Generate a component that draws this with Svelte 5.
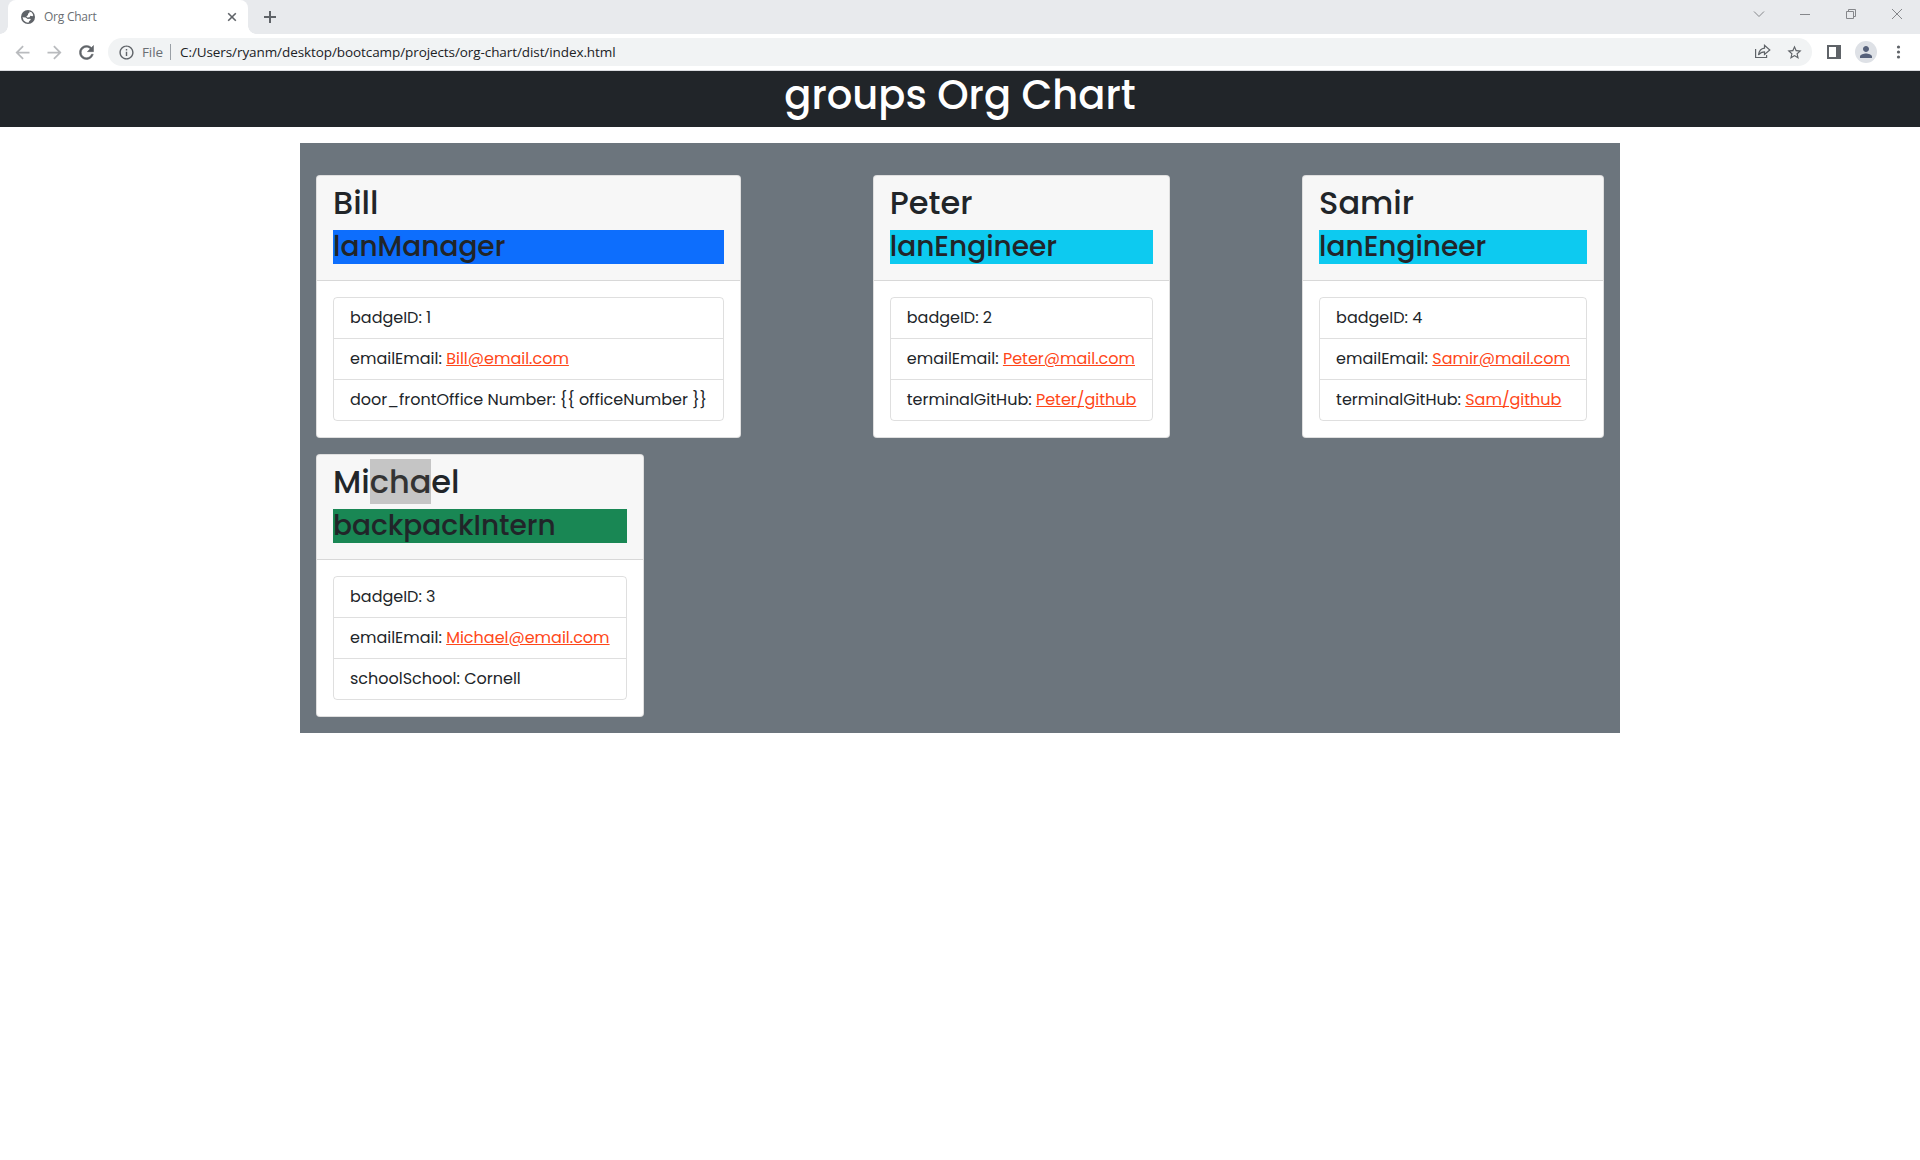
<script>
  const people = [
    {
      name: [{ text: 'Bill' }],
      role: 'lanManager', tone: 'manager',
      rows: [
        { label: 'badgeID: 1' },
        { label: 'emailEmail: ', link: 'Bill@email.com' },
        { label: 'door_frontOffice Number: {{ officeNumber }}' }
      ]
    },
    {
      name: [{ text: 'Peter' }],
      role: 'lanEngineer', tone: 'engineer',
      rows: [
        { label: 'badgeID: 2' },
        { label: 'emailEmail: ', link: 'Peter@mail.com' },
        { label: 'terminalGitHub: ', link: 'Peter/github' }
      ]
    },
    {
      name: [{ text: 'Samir' }],
      role: 'lanEngineer', tone: 'engineer',
      rows: [
        { label: 'badgeID: 4' },
        { label: 'emailEmail: ', link: 'Samir@mail.com' },
        { label: 'terminalGitHub: ', link: 'Sam/github' }
      ]
    },
    {
      name: [{ text: 'Mi' }, { text: 'cha', selected: true }, { text: 'el' }],
      role: 'backpackIntern', tone: 'intern',
      rows: [
        { label: 'badgeID: 3' },
        { label: 'emailEmail: ', link: 'Michael@email.com' },
        { label: 'schoolSchool: Cornell' }
      ]
    }
  ];

  // Tracks the browser's own labels out or in to the given width.
  function fit(node, width) {
    const natural = node.getBoundingClientRect().width;
    node.style.letterSpacing = (width - natural) / node.textContent.length + 'px';
  }
</script>

<div class="browser">
  <div class="tabstrip">
    <div class="tab">
      <svg class="globe" viewBox="0 0 14 14"><circle cx="7" cy="7" r="7" /><path d="M8.300 1.600l2.600 1 1.400 2.600-.8 1.100-2.200-.6-.7 1.500-2.300.4-1-1.100 1.700-1.500.1-1.500 1.300-.5zM1.500 7.300l3.100.3 2.100 1.500 2.500-.3.6 1-1.500 1.100-.9 1.800-2.300-.4-2.400-1.900z" /></svg>
      <span class="tab-title"><span class="fit" use:fit={52.5}>Org Chart</span></span>
      <svg class="tab-close" viewBox="0 0 10 10"><path d="M1.2 1.2l7.6 7.6M8.8 1.2L1.2 8.8" /></svg>
    </div>
    <svg class="new-tab" viewBox="0 0 12 12"><path d="M6 0v12M0 6h12" /></svg>
    <div class="window-buttons">
      <span><svg viewBox="0 0 12 12"><path d="M1 3.500l5 5 5-5" /></svg></span>
      <span><svg viewBox="0 0 12 12"><path d="M1 6.500h10" /></svg></span>
      <span><svg viewBox="0 0 12 12"><path d="M1.500 3.500h7v7h-7zM3.500 3.500v-2h7v7h-2" /></svg></span>
      <span><svg viewBox="0 0 12 12"><path d="M1 1l10 10M11 1L1 11" /></svg></span>
    </div>
  </div>

  <div class="toolbar">
    <span class="tool faded"><svg class="nav" viewBox="0 0 24 24"><path d="M20 11H7.83l5.59-5.59L12 4l-8 8 8 8 1.41-1.41L7.83 13H20v-2z" /></svg></span>
    <span class="tool faded"><svg class="nav" viewBox="0 0 24 24"><path d="M4 11h12.170l-5.590-5.590L12 4l8 8-8 8-1.410-1.410L16.170 13H4v-2z" /></svg></span>
    <span class="tool"><svg class="nav reload" viewBox="0 0 24 24"><path d="M17.65 6.35C16.2 4.9 14.21 4 12 4c-4.42 0-7.99 3.58-7.99 8s3.57 8 7.99 8c3.73 0 6.84-2.55 7.73-6h-2.08c-.82 2.33-3.04 4-5.65 4-3.31 0-6-2.69-6-6s2.69-6 6-6c1.66 0 3.14.69 4.22 1.78L13 11h7V4l-2.35 2.35z" /></svg></span>
    <div class="omnibox">
      <svg class="info" viewBox="0 0 24 24"><path d="M11 7h2v2h-2zm0 4h2v6h-2zm1-9C6.48 2 2 6.48 2 12s4.48 10 10 10 10-4.48 10-10S17.52 2 12 2zm0 18c-4.41 0-8-3.59-8-8s3.59-8 8-8 8 3.59 8 8-3.59 8-8 8z" /></svg>
      <span class="scheme"><span class="fit" use:fit={21}>File</span></span>
      <span class="divider"></span>
      <span class="url"><span class="fit" use:fit={435.5}>C:/Users/ryanm/desktop/bootcamp/projects/org-chart/dist/index.html</span></span>
      <span class="tool"><svg class="share" viewBox="0 0 16 16"><path d="M.6 5v8.500h11V11M3.500 11C4 7.500 6 4.500 9.500 4.200V1.300L14.800 6 9.500 10.500V7.800C7 7.800 5 9 3.500 11z" /></svg></span>
      <span class="tool"><svg class="star" viewBox="0 0 24 24"><path d="M22 9.24l-7.19-.62L12 2 9.19 8.63 2 9.24l5.46 4.73L5.82 21 12 17.27 18.18 21l-1.63-7.03L22 9.24zM12 15.4l-3.76 2.27 1-4.28-3.32-2.88 4.38-.38L12 6.1l1.71 4.04 4.38.38-3.32 2.88 1 4.28L12 15.4z" /></svg></span>
    </div>
    <span class="tool"><svg class="panel" viewBox="0 0 14 14"><path fill-rule="evenodd" d="M0 0h14v14H0zM2 2v10h7V2z" /></svg></span>
    <span class="tool"><span class="avatar"><svg viewBox="0 0 24 24"><path d="M12 12c2.21 0 4-1.79 4-4s-1.79-4-4-4-4 1.79-4 4 1.79 4 4 4zm0 2c-2.67 0-8 1.34-8 4v2h16v-2c0-2.66-5.33-4-8-4z" /></svg></span></span>
    <span class="tool"><svg class="dots" viewBox="0 0 4 14"><circle cx="2.500" cy="2" r="1.6" /><circle cx="2.500" cy="7" r="1.6" /><circle cx="2.500" cy="12" r="1.6" /></svg></span>
  </div>
</div>

<header><h1>groups Org Chart</h1></header>

<main>
  {#each people as person}
    <article class="card">
      <div class="card-header">
        <h2>{#each person.name as part}<span class:selected={part.selected}>{part.text}</span>{/each}</h2>
        <h3 class={person.tone}>{person.role}</h3>
      </div>
      <div class="card-body">
        <ul>
          {#each person.rows as row}
            <li><span>{row.label}</span>{#if row.link}<a href="#top">{row.link}</a>{/if}</li>
          {/each}
        </ul>
      </div>
    </article>
  {/each}
</main>

<style>
  :global(body) {
    margin: 0;
    background: #fff;
    color: #212529;
    font: 400 16px/24px Poppins, Inter, sans-serif;
  }
  .fit { white-space: pre; }

  .browser {
    font-family: 'Open Sans', sans-serif;
    border-bottom: 1px solid #dadce0;
  }
  svg { display: block; flex: none; }

  .tabstrip {
    display: flex;
    align-items: center;
    height: 34px;
    padding-left: 8px;
    background: #e8eaed;
  }
  .tab {
    position: relative;
    display: flex;
    align-items: center;
    box-sizing: border-box;
    width: 240px;
    height: 34px;
    padding: 0 11px 0 13px;
    border-radius: 8px 8px 0 0;
    background: #fff;
  }
  .tab::before, .tab::after {
    content: '';
    position: absolute;
    bottom: 0;
    width: 8px;
    height: 8px;
  }
  .tab::before { left: -8px; background: radial-gradient(circle at 0 0, transparent 7.5px, #fff 8px); }
  .tab::after { right: -8px; background: radial-gradient(circle at 100% 0, transparent 7.5px, #fff 8px); }
  .globe { width: 14px; height: 14px; fill: #5f6368; }
  .globe path { fill: #fff; }
  .tab-title { flex: 1; margin-left: 9px; font-size: 12px; line-height: 16px; color: #6a6e73; }
  .tab-close { width: 10px; height: 10px; stroke: #5f6368; stroke-width: 1.6; }
  .new-tab { width: 12px; height: 12px; margin-left: 16px; stroke: #5f6368; stroke-width: 2; }
  .window-buttons { display: flex; align-self: flex-start; margin-left: auto; height: 28px; }
  .window-buttons span { display: grid; place-items: center; width: 46px; }
  .window-buttons svg { width: 12px; height: 12px; fill: none; stroke: #85878b; stroke-width: 1; }

  .toolbar {
    display: flex;
    align-items: center;
    height: 36px;
    padding: 0 6px;
    background: #fff;
  }
  .tool { display: grid; place-items: center; flex: none; width: 32px; height: 28px; fill: #5f6368; }
  .faded { fill: #b9bbbe; }
  .nav { width: 21px; height: 21px; }
  .reload { stroke: #5f6368; stroke-width: 0.6; }
  .omnibox {
    display: flex;
    align-items: center;
    flex: 1;
    height: 28px;
    margin: 0 6px;
    padding: 0 2px 0 9.5px;
    border-radius: 14px;
    background: #f1f3f4;
    box-sizing: border-box;
    font-size: 13.5px;
    line-height: 20px;
  }
  .info { width: 17px; height: 17px; fill: #5f6368; }
  .scheme { width: 28px; margin-left: 7.5px; color: #6a6e73; }
  .divider { width: 1px; height: 16px; background: #9aa0a6; }
  .url { flex: 1; margin-left: 9px; color: #202124; }
  .share { width: 16px; height: 16px; margin-left: 1px; fill: none; stroke: #5f6368; stroke-width: 1.2; }
  .star { width: 17px; height: 17px; }
  .panel { width: 14px; height: 14px; }
  .avatar { display: grid; place-items: center; width: 22px; height: 22px; border-radius: 50%; background: #dee1e6; }
  .avatar svg { width: 18px; height: 18px; fill: #56617a; }
  .dots { width: 4px; height: 14px; overflow: visible; }

  header { height: 56px; background: #212529; color: #fff; text-align: center; }
  h1, h2, h3 { margin: 0 0 8px; font-weight: 500; line-height: 1.2; }
  h1 { font-size: 40px; }
  h2 { font-size: 32px; }
  h3 { font-size: 28px; }

  main {
    display: flex;
    flex-wrap: wrap;
    justify-content: space-between;
    gap: 16px;
    box-sizing: border-box;
    width: 1320px;
    margin: 16px auto 0;
    padding: 32px 16px 16px;
    background: #6c757d;
  }
  .card {
    border: 1px solid rgba(0, 0, 0, 0.125);
    border-radius: 4px;
    background: #fff;
  }
  .card-header {
    padding: 8px 16px;
    border-bottom: 1px solid rgba(0, 0, 0, 0.125);
    border-radius: 3px 3px 0 0;
    background: rgba(0, 0, 0, 0.03);
  }
  .selected { background: #c5c5c5; color: #333; }
  .manager { background: #0d6efd; }
  .engineer { background: #0dcaf0; }
  .intern { background: #198754; }
  .card-body { padding: 16px; }
  ul {
    margin: 0;
    padding: 0;
    list-style: none;
    border: 1px solid rgba(0, 0, 0, 0.125);
    border-radius: 4px;
  }
  li { padding: 8px 16px; white-space: nowrap; }
  li span { white-space: pre; }
  li + li { border-top: 1px solid rgba(0, 0, 0, 0.125); }
  a { color: #ff4719; text-decoration: underline; }
</style>
